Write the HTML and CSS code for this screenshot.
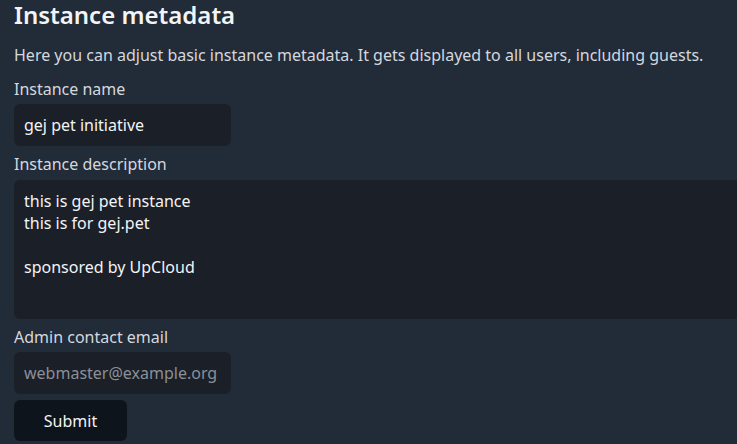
FILE: index.html
```html
<!DOCTYPE html>
<html lang="en">
<head>
<meta charset="utf-8">
<title>Instance metadata</title>
<link rel="stylesheet" href="styles.css">
</head>
<body>
<main class="page">
  <h1 class="title">Instance metadata</h1>
  <p class="intro">Here you can adjust basic instance metadata. It gets displayed to all users, including guests.</p>
  <form class="form">
    <label class="label" for="name">Instance name</label>
    <input class="field" id="name" type="text" value="gej pet initiative">
    <label class="label label-spaced" for="desc">Instance description</label>
    <textarea class="field area" id="desc">this is gej pet instance
this is for gej.pet

sponsored by UpCloud</textarea>
    <label class="label label-spaced" for="email">Admin contact email</label>
    <input class="field" id="email" type="email" placeholder="webmaster@example.org">
    <button class="submit" type="button">Submit</button>
  </form>
</main>
</body>
</html>
```
FILE: styles.css
```css
html, body {
  margin: 0;
  padding: 0;
  background: #222b38;
  overflow: hidden;
}
body {
  font-family: "Noto Sans", sans-serif;
  font-size: 16px;
  color: #dfe3e8;
}
.page {
  padding: 0 14px;
}
.title {
  margin: -2px 0 0;
  font-size: 24px;
  font-weight: 600;
  line-height: 33px;
  color: #f3f4f6;
}
.intro {
  margin: 13px 0 0;
  line-height: 22px;
  color: #d4d8de;
  white-space: nowrap;
}
.form {
  display: flex;
  flex-direction: column;
  align-items: flex-start;
  margin-top: 12px;
}
.label {
  line-height: 22px;
  color: #d4d8de;
}
.label-spaced {
  margin-top: 7px;
}
.field {
  box-sizing: border-box;
  margin-top: 4px;
  width: 217px;
  height: 42px;
  padding: 0 10px;
  border: 0;
  border-radius: 6px;
  background: #1a1f28;
  color: #f3f4f6;
  font-family: "Noto Sans", sans-serif;
  font-size: 16px;
  outline: none;
}
.field::placeholder {
  color: #8b9097;
}
.area {
  margin-top: 5px;
  width: 760px;
  height: 139px;
  padding: 10px;
  line-height: 22px;
  resize: none;
}
.submit {
  margin-top: 6px;
  width: 113px;
  height: 41px;
  border: 0;
  border-radius: 6px;
  background: #0e141b;
  color: #f3f4f6;
  font-family: "Noto Sans", sans-serif;
  font-size: 16px;
  cursor: pointer;
}
```
